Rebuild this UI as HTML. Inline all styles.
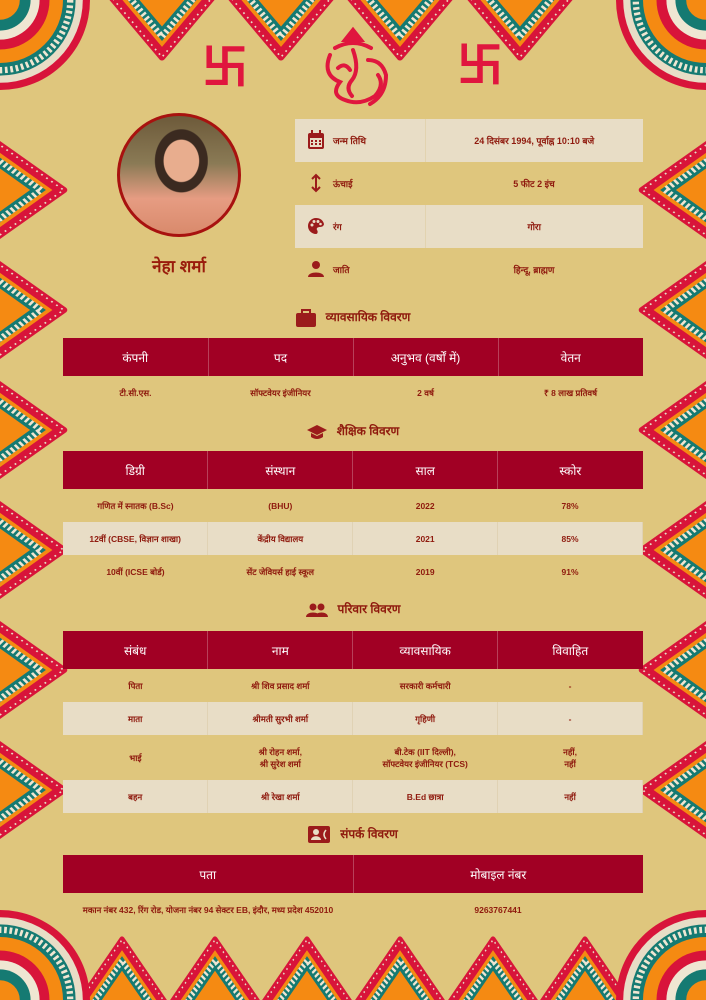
<!DOCTYPE html>
<html><head><meta charset="utf-8"><style>
*{margin:0;padding:0;box-sizing:border-box}
html,body{width:706px;height:1000px;overflow:hidden}
body{background:#dfc67d;font-family:"Liberation Sans","Noto Sans CJK SC",sans-serif;color:#8f1a0e;position:relative}
.abs{position:absolute}
svg.bg{position:absolute;left:0;top:0}
.info{position:absolute;left:295px;top:119px;width:348px;border-collapse:collapse}
.info td{height:43px;font-size:9px;font-weight:bold}
.info tr.l td{background:#e8ddc6}
.info td.ic{width:34px;text-align:center;padding-left:8px}
.info td.k{width:96px;border-right:1px solid #e2d3b0;padding-left:4px}
.info tr:not(.l) td.k{border-right:none}
.info td.v{text-align:center}
table.t{position:absolute;left:63px;width:580px;border-collapse:collapse;table-layout:fixed}
table.t th{background:#a10024;color:#fff;font-weight:normal;font-size:12px;height:38px;border-right:1px solid #b8405a}
table.t th:last-child{border-right:none}
table.t td{height:33px;text-align:center;font-size:8.5px;font-weight:bold;line-height:12px}
table.t tr.l td{background:#e8ddc6;border-right:1px solid #e0d2b4}
.sec{position:absolute;left:0;width:706px;text-align:center;font-size:12px;font-weight:bold;color:#8f1a0e}
.sec svg{vertical-align:middle;margin-right:10px}
.sw{position:absolute;color:#e0163e;font-size:46px;font-weight:bold;line-height:1}
</style></head><body>
<svg class="bg" width="706" height="1000" viewBox="0 0 706 1000">
<defs>
<g id="p">
<polygon points="-64,-70 64,-70 0,6" fill="#d8143a" stroke="#d8143a" stroke-width="8" stroke-linejoin="round"/>
<polygon points="-64,-70 64,-70 0,6" fill="none" stroke="#e8ddc6" stroke-width="2" stroke-dasharray="2 5"/>
<polygon points="-54,-70 54,-70 0,-6" fill="#f58a12"/>
<polygon points="-48,-70 48,-70 0,-13" fill="#157a72"/>
<polygon points="-43,-70 43,-70 0,-18" fill="none" stroke="#efe6d2" stroke-width="7" stroke-dasharray="3 3"/>
<polygon points="-34,-70 34,-70 0,-30" fill="#f58a12"/>
</g>
<g id="c">
<circle r="100" fill="#d8143a"/>
<circle r="92" fill="#e8ddc6"/>
<circle r="84" fill="#157a72"/>
<circle r="78" fill="none" stroke="#efe6d2" stroke-width="7" stroke-dasharray="3 3"/>
<circle r="70" fill="#f58a12"/>
<circle r="55" fill="#d8143a"/>
<circle r="44" fill="#efe6d2"/>
<circle r="34" fill="#157a72"/>
<circle r="22" fill="#f58a12"/>
</g>
</defs>
<!-- top -->
<use href="#p" transform="translate(162,52) scale(0.85)"/>
<use href="#p" transform="translate(281,52) scale(0.85)"/>
<use href="#p" transform="translate(400,52) scale(0.85)"/>
<use href="#p" transform="translate(520,52) scale(0.85)"/>
<!-- bottom -->
<use href="#p" transform="translate(122,945) rotate(180) scale(0.7,0.86)"/>
<use href="#p" transform="translate(215,945) rotate(180) scale(0.7,0.86)"/>
<use href="#p" transform="translate(307,945) rotate(180) scale(0.7,0.86)"/>
<use href="#p" transform="translate(400,945) rotate(180) scale(0.7,0.86)"/>
<use href="#p" transform="translate(493,945) rotate(180) scale(0.7,0.86)"/>
<use href="#p" transform="translate(585,945) rotate(180) scale(0.7,0.86)"/>
<!-- left -->
<use href="#p" transform="translate(58,190) rotate(-90) scale(0.78,0.93)"/>
<use href="#p" transform="translate(58,310) rotate(-90) scale(0.78,0.93)"/>
<use href="#p" transform="translate(58,430) rotate(-90) scale(0.78,0.93)"/>
<use href="#p" transform="translate(58,550) rotate(-90) scale(0.78,0.93)"/>
<use href="#p" transform="translate(58,670) rotate(-90) scale(0.78,0.93)"/>
<use href="#p" transform="translate(58,790) rotate(-90) scale(0.78,0.93)"/>
<!-- right -->
<use href="#p" transform="translate(648,190) rotate(90) scale(0.78,0.93)"/>
<use href="#p" transform="translate(648,310) rotate(90) scale(0.78,0.93)"/>
<use href="#p" transform="translate(648,430) rotate(90) scale(0.78,0.93)"/>
<use href="#p" transform="translate(648,550) rotate(90) scale(0.78,0.93)"/>
<use href="#p" transform="translate(648,670) rotate(90) scale(0.78,0.93)"/>
<use href="#p" transform="translate(648,790) rotate(90) scale(0.78,0.93)"/>
<use href="#c" transform="translate(0,0) scale(0.9)"/>
<use href="#c" transform="translate(706,0) scale(0.9)"/>
<use href="#c" transform="translate(0,1000) scale(0.9)"/>
<use href="#c" transform="translate(706,1000) scale(0.9)"/>
<!-- ganesh -->
<g fill="none" stroke="#e0163e" stroke-width="4" stroke-linecap="round">
<path d="M345,40 L353,30 L361,40 Z" fill="#e0163e"/>
<path d="M335,48 Q353,38 371,48"/>
<path d="M330,55 Q322,75 340,82 Q330,95 345,100 Q360,106 375,96 Q385,85 378,75"/>
<path d="M353,50 Q360,70 352,80 Q345,88 352,96"/>
<path d="M368,60 Q382,60 386,75 Q386,95 370,104"/>
<path d="M338,68 Q345,62 350,70"/>
</g>
</svg>
<div class="sw" style="left:202px;top:44px">卐</div>
<div class="sw" style="left:457px;top:42px">卐</div>

<div class="abs" style="left:117px;top:113px;width:124px;height:124px;border-radius:50%;border:3px solid #a8120f;background:radial-gradient(ellipse at 52% 38%,#e8ad8e 0 20%,#3b2a20 21% 30%,transparent 31%),linear-gradient(180deg,#6d5a3a 0%,#8a7a55 40%,#e69c82 70%,#d98a6c 100%);"></div>
<div class="abs" style="left:100px;width:158px;top:254px;text-align:center;font-size:17px;font-weight:bold;color:#9a1c0c">नेहा शर्मा</div>

<table class="info">
<tr class="l"><td class="ic"><svg width="18" height="20" viewBox="0 0 18 20"><rect x="1" y="3" width="16" height="16" rx="2" fill="#9b1b1b"/><rect x="4" y="0" width="2" height="5" fill="#9b1b1b"/><rect x="12" y="0" width="2" height="5" fill="#9b1b1b"/><rect x="3" y="8" width="12" height="9" fill="#e8ddc6"/><g fill="#9b1b1b"><rect x="4" y="10" width="2" height="2"/><rect x="8" y="10" width="2" height="2"/><rect x="12" y="10" width="2" height="2"/><rect x="4" y="13" width="2" height="2"/><rect x="8" y="13" width="2" height="2"/><rect x="12" y="13" width="2" height="2"/></g></svg></td><td class="k">जन्म तिथि</td><td class="v">24 दिसंबर 1994, पूर्वाह्न 10:10 बजे</td></tr>
<tr><td class="ic"><svg width="10" height="20" viewBox="0 0 10 20"><path d="M5,2 V18 M1,6 L5,2 L9,6 M1,14 L5,18 L9,14" stroke="#9b1b1b" stroke-width="2" fill="none"/></svg></td><td class="k">ऊंचाई</td><td class="v">5 फीट 2 इंच</td></tr>
<tr class="l"><td class="ic"><svg width="18" height="18" viewBox="0 0 18 18"><path d="M9,1 A8,8 0 1 0 9,17 C11,17 11,14 10,13 C9,11 11,10 13,10 C16,10 17,8 17,7 C16,3 13,1 9,1Z" fill="#9b1b1b"/><g fill="#e8ddc6"><circle cx="5" cy="8" r="1.5"/><circle cx="7" cy="4.5" r="1.5"/><circle cx="11" cy="4.5" r="1.5"/><circle cx="13.5" cy="7" r="1.3"/></g></svg></td><td class="k">रंग</td><td class="v">गोरा</td></tr>
<tr><td class="ic"><svg width="16" height="18" viewBox="0 0 16 18"><circle cx="8" cy="5" r="4" fill="#9b1b1b"/><path d="M0,17 C0,11 16,11 16,17Z" fill="#9b1b1b"/></svg></td><td class="k">जाति</td><td class="v">हिन्दू, ब्राह्मण</td></tr>
</table>

<div class="sec" style="top:308px"><svg width="20" height="18" viewBox="0 0 20 18"><rect x="0" y="4" width="20" height="14" rx="2" fill="#9b1b1b"/><path d="M6,4 V1 H14 V4" stroke="#9b1b1b" stroke-width="2" fill="none"/></svg>व्यावसायिक विवरण</div>
<table class="t" style="top:338px">
<tr><th>कंपनी</th><th>पद</th><th>अनुभव (वर्षों में)</th><th>वेतन</th></tr>
<tr><td>टी.सी.एस.</td><td>सॉफ्टवेयर इंजीनियर</td><td>2 वर्ष</td><td>₹ 8 लाख प्रतिवर्ष</td></tr>
</table>

<div class="sec" style="top:422px"><svg width="20" height="16" viewBox="0 0 20 16"><path d="M0,6 L10,1 L20,6 L10,11Z" fill="#9b1b1b"/><path d="M4,9 V13 Q10,17 16,13 V9 L10,12Z" fill="#9b1b1b"/></svg>शैक्षिक विवरण</div>
<table class="t" style="top:451px">
<tr><th>डिग्री</th><th>संस्थान</th><th>साल</th><th>स्कोर</th></tr>
<tr><td>गणित में स्नातक (B.Sc)</td><td>(BHU)</td><td>2022</td><td>78%</td></tr>
<tr class="l"><td>12वीं (CBSE, विज्ञान शाखा)</td><td>केंद्रीय विद्यालय</td><td>2021</td><td>85%</td></tr>
<tr><td>10वीं (ICSE बोर्ड)</td><td>सेंट जेवियर्स हाई स्कूल</td><td>2019</td><td>91%</td></tr>
</table>

<div class="sec" style="top:600px"><svg width="22" height="14" viewBox="0 0 22 14"><circle cx="7" cy="4" r="3.5" fill="#9b1b1b"/><circle cx="15" cy="4" r="3.5" fill="#9b1b1b"/><path d="M0,14 C0,8 14,8 14,14Z M9,14 C9,8 22,8 22,14Z" fill="#9b1b1b"/></svg>परिवार विवरण</div>
<table class="t" style="top:631px">
<tr><th>संबंध</th><th>नाम</th><th>व्यावसायिक</th><th>विवाहित</th></tr>
<tr><td>पिता</td><td>श्री शिव प्रसाद शर्मा</td><td>सरकारी कर्मचारी</td><td>-</td></tr>
<tr class="l"><td>माता</td><td>श्रीमती सुरभी शर्मा</td><td>गृहिणी</td><td>-</td></tr>
<tr><td style="height:45px">भाई</td><td>श्री रोहन शर्मा,<br>श्री सुरेश शर्मा</td><td>बी.टेक (IIT दिल्ली),<br>सॉफ्टवेयर इंजीनियर (TCS)</td><td>नहीं,<br>नहीं</td></tr>
<tr class="l"><td>बहन</td><td>श्री रेखा शर्मा</td><td>B.Ed छात्रा</td><td>नहीं</td></tr>
</table>

<div class="sec" style="top:825px"><svg width="22" height="17" viewBox="0 0 22 17"><rect width="22" height="17" rx="2" fill="#9b1b1b"/><circle cx="8" cy="6" r="3" fill="#e8ddc6"/><path d="M3,14 C3,9 13,9 13,14Z" fill="#e8ddc6"/><path d="M18,4 Q14,8.5 18,13" stroke="#e8ddc6" stroke-width="1.5" fill="none"/></svg>संपर्क विवरण</div>
<table class="t" style="top:855px">
<tr><th>पता</th><th>मोबाइल नंबर</th></tr>
<tr><td>मकान नंबर 432, रिंग रोड, योजना नंबर 94 सेक्टर EB, इंदौर, मध्य प्रदेश 452010</td><td>9263767441</td></tr>
</table>
</body></html>
